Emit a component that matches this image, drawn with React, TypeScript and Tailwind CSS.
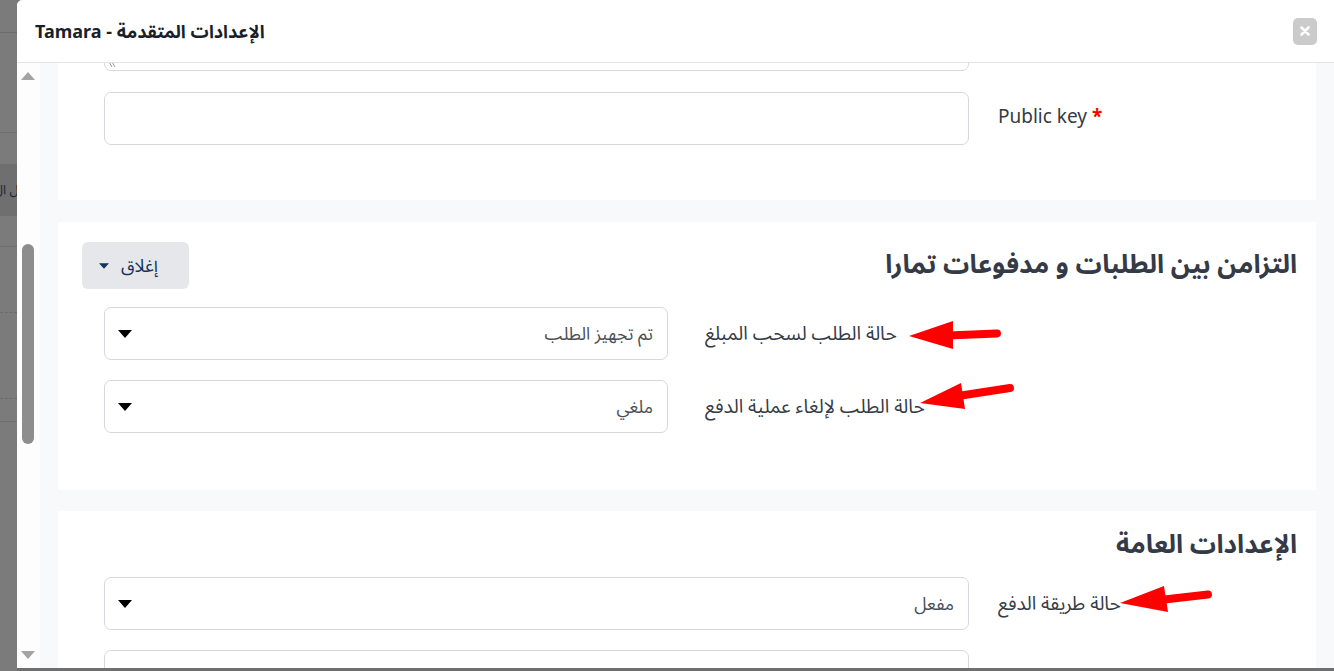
import React from "react"

const font = { fontFamily: '"Noto Sans", "Noto Sans Arabic", "DejaVu Sans", sans-serif' }

const Caret = ({ className }: { className?: string }) => (
  <svg viewBox="0 0 14 8" className={className}>
    <path d="M0 0 H14 L7 8 Z" fill="currentColor" />
  </svg>
)

// a select-like box: caret on the left, value on the right (rtl)
const SelectBox = ({ value, width }: { value: string; width: string }) => (
  <div className={`${width} h-[53px] shrink-0 rounded-[7px] border border-[#d6d8dd] bg-white flex items-center justify-between pl-[13px] pr-[14px]`}>
    <Caret className="w-[14px] h-[8px] text-black" />
    <span dir="rtl" className="text-[17.5px] text-[#4a4f57]">{value}</span>
  </div>
)

const Label = ({ children }: { children: React.ReactNode }) => (
  <span dir="rtl" className="text-[19px] text-[#353b47] whitespace-nowrap">{children}</span>
)

const Backdrop = () => (
  <div className="w-[17px] h-full shrink-0 flex flex-col bg-[#7b7b7b]">
    <div className="h-[33px] border-b border-[#6c6c6c]" />
    <div className="h-[100px] border-b border-[#6e6e6e]" />
    <div className="h-[31px]" />
    <div className="h-[52px] bg-[#6f6f6f] flex items-center overflow-hidden">
      <span dir="rtl" className="text-[13px] text-[#1b2433] whitespace-nowrap -ml-[6px]">ل ال</span>
    </div>
    <div className="h-[31px] border-b border-[#6e6e6e]" />
    <div className="h-[66px] border-b border-dashed border-[#6a6a6a]" />
    <div className="h-[86px] border-b border-dashed border-[#6a6a6a]" />
    <div className="h-[23px] border-b border-[#6e6e6e]" />
    <div className="flex-1" />
  </div>
)

const Scrollbar = () => (
  <div className="w-[23px] shrink-0 bg-[#fdfdfd] flex flex-col items-center">
    <svg viewBox="0 0 14 8" className="w-[14px] h-[8px] mt-[9px] ml-[-1px]">
      <path d="M0 8 H14 L7 0 Z" fill="#a3a3a3" />
    </svg>
    <div className="w-[12px] h-[200px] mt-[164px] ml-[-2px] rounded-full bg-[#8d8d8d]" />
    <div className="flex-1" />
    <svg viewBox="0 0 14 8" className="w-[14px] h-[8px] mb-[9px] ml-[-1px]">
      <path d="M0 0 H14 L7 8 Z" fill="#a3a3a3" />
    </svg>
  </div>
)

const Arrows = () => (
  <svg className="absolute inset-0 pointer-events-none" width="1334" height="671">
    <g fill="#ff0000" stroke="#ff0000" strokeLinecap="round">
      <line x1="948" y1="335.5" x2="997" y2="333.5" strokeWidth="8" />
      <polygon points="909,336 953,321 953,349" stroke="none" />
      <line x1="958" y1="396" x2="1010" y2="388" strokeWidth="8" />
      <polygon points="920,403 961,383 965,409" stroke="none" />
      <line x1="1160" y1="600" x2="1208" y2="594.5" strokeWidth="8" />
      <polygon points="1120,603 1164,586 1168,612" stroke="none" />
    </g>
  </svg>
)

export default function App() {
  return (
    <div style={font} className="relative w-[1334px] h-[671px] overflow-hidden flex bg-[#6f6f6f]">
      <Backdrop />
      <div className="flex-1 h-[668px] flex flex-col bg-white rounded-tl-[5px] overflow-hidden">
        {/* header */}
        <div className="h-[63px] shrink-0 border-b border-[#e4e4e4] flex items-center justify-between pl-[18px] pr-[17px]">
          <h1 dir="rtl" className="text-[18px] font-bold text-[#1a1f2b]">الإعدادات المتقدمة - Tamara</h1>
          <button className="w-[24px] h-[27px] rounded-[5px] bg-[#cbcbcb] flex items-center justify-center">
            <svg viewBox="0 0 10 10" className="w-[10px] h-[10px]">
              <path d="M1.5 1.5 L8.5 8.5 M8.5 1.5 L1.5 8.5" stroke="white" strokeWidth="2.6" strokeLinecap="round" />
            </svg>
          </button>
        </div>

        {/* body */}
        <div className="flex-1 flex min-h-0">
          <Scrollbar />
          <div className="flex-1 bg-[#f8f9fa] pl-[18px] pr-[18px] overflow-hidden">
            <div className="flex flex-col">
              {/* card 1 */}
              <div className="bg-white -mt-[45px] pl-[46px] pb-[55px] flex flex-col gap-[21px]">
                <div className="relative w-[865px] h-[53px] rounded-[7px] border border-[#d6d8dd]">
                  <svg viewBox="0 0 8 6" className="absolute left-[3px] bottom-[2px] w-[8px] h-[6px]">
                    <path d="M1 0 L4 5 M4 0 L7 5" stroke="#8a8a8a" strokeWidth="0.9" />
                  </svg>
                </div>
                <div className="flex items-center">
                  <div className="w-[865px] h-[53px] rounded-[7px] border border-[#d6d8dd]" />
                  <span className="ml-[29px] -mt-[5px] text-[19px] text-[#353b47]">
                    Public key <span className="text-[#ff0000] font-bold">*</span>
                  </span>
                </div>
              </div>

              {/* card 2 */}
              <div className="bg-white mt-[22px] pt-[20px] pl-[24px] pr-[19px] pb-[57px]">
                <div className="flex items-center justify-between h-[47px]">
                  <button className="w-[107px] h-[47px] rounded-[6px] bg-[#e5e7eb] flex items-center justify-start pl-[17px] gap-[12px] text-[#16325c]">
                    <Caret className="w-[10px] h-[6px]" />
                    <span className="text-[17.5px]">إغلاق</span>
                  </button>
                  <h2 dir="rtl" className="text-[26px] font-bold text-[#343a46] -mt-[5px]">التزامن بين الطلبات و مدفوعات تمارا</h2>
                </div>
                <div className="pl-[22px] mt-[18px] flex flex-col gap-[20px]">
                  <div className="flex items-center">
                    <SelectBox value="تم تجهيز الطلب" width="w-[564px]" />
                    <div className="ml-[37px]"><Label>حالة الطلب لسحب المبلغ</Label></div>
                  </div>
                  <div className="flex items-center">
                    <SelectBox value="ملغي" width="w-[564px]" />
                    <div className="ml-[37px]"><Label>حالة الطلب لإلغاء عملية الدفع</Label></div>
                  </div>
                </div>
              </div>

              {/* card 3 */}
              <div className="bg-white mt-[21px] pt-[12px] pl-[24px] pr-[19px] pb-[40px]">
                <div className="flex justify-end h-[40px] items-center">
                  <h2 dir="rtl" className="text-[26px] font-bold text-[#343a46]">الإعدادات العامة</h2>
                </div>
                <div className="pl-[22px] mt-[14px] flex flex-col gap-[20px]">
                  <div className="flex items-center">
                    <SelectBox value="مفعل" width="w-[865px]" />
                    <div className="ml-[29px]"><Label>حالة طريقة الدفع</Label></div>
                  </div>
                  <div className="flex items-center">
                    <SelectBox value="" width="w-[865px]" />
                    <div className="ml-[29px]"><Label>حالة الطلب</Label></div>
                  </div>
                </div>
              </div>
            </div>
          </div>
        </div>
      </div>
      <Arrows />
    </div>
  )
}
